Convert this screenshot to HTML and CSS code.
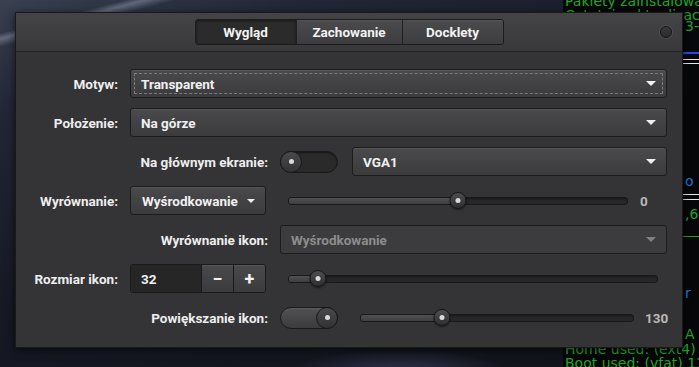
FILE: index.html
```html
<!DOCTYPE html>
<html lang="pl">
    <head>
        <meta charset="UTF-8" />
        <meta name="viewport" content="width=device-width, initial-scale=1.0" />
        <title>Ustawienia doku</title>
        <link rel="stylesheet" href="styles.css">
    </head>
    <body>
        <div id="desktop">
            <!-- conky na pulpicie, w większości zasłonięty oknem -->
            <div id="conky">
                <div class="c-line c-first">Pakiety zainstalowane: 1647</div>
                <div class="c-line">Ostatnia aktualizacja:</div>
                <div class="c-line c-edge c-date">3-12-01</div>
                <div class="c-rule blue r1"></div>
                <div class="c-rule white r2"></div>
                <div class="c-rule white r3"></div>
                <div class="c-line c-edge c-info">o</div>
                <div class="c-rule white r4"></div>
                <div class="c-rule white r5"></div>
                <div class="c-line c-edge c-num">,68</div>
                <div class="c-rule green r6"></div>
                <div class="c-line c-edge c-info2">r</div>
                <div class="c-line c-edge c-hdd">A HDD</div>
                <div class="c-line c-home">Home used: (ext4) 12%</div>
                <div class="c-line">Boot used: (vfat) 11%</div>
            </div>

            <div id="dialog">
                <div class="titlebar">
                    <div></div>
                    <div class="tabs">
                        <span class="tab active">Wygląd</span>
                        <span class="tab wide">Zachowanie</span>
                        <span class="tab">Docklety</span>
                    </div>
                    <span class="close"></span>
                </div>

                <div class="form">
                    <div class="row">
                        <span class="lbl">Motyw:</span>
                        <div class="combo focus"><span>Transparent</span><i class="arrow"></i></div>
                    </div>
                    <div class="row">
                        <span class="lbl">Położenie:</span>
                        <div class="combo"><span>Na górze</span><i class="arrow"></i></div>
                    </div>
                    <div class="row">
                        <span class="lbl sub">Na głównym ekranie:</span>
                        <div class="switch"><span class="knob"></span></div>
                        <div class="combo screen"><span>VGA1</span><i class="arrow"></i></div>
                    </div>
                    <div class="row">
                        <span class="lbl">Wyrównanie:</span>
                        <div class="button"><span>Wyśrodkowanie</span><i class="arrow small"></i></div>
                        <div class="slider">
                            <div class="track"><div class="fill" style="width: 50%"></div></div>
                            <span class="thumb" style="left: 50%"></span>
                        </div>
                        <span class="value">0</span>
                    </div>
                    <div class="row">
                        <span class="lbl sub">Wyrównanie ikon:</span>
                        <div class="combo disabled"><span>Wyśrodkowanie</span><i class="arrow"></i></div>
                    </div>
                    <div class="row">
                        <span class="lbl">Rozmiar ikon:</span>
                        <div class="spin">
                            <span class="field">32</span>
                            <span class="step">&minus;</span>
                            <span class="step">+</span>
                        </div>
                        <div class="slider size">
                            <div class="track"><div class="fill" style="width: 8%"></div></div>
                            <span class="thumb" style="left: 8%"></span>
                        </div>
                    </div>
                    <div class="row">
                        <span class="lbl sub">Powiększanie ikon:</span>
                        <div class="switch on"><span class="knob"></span></div>
                        <div class="slider">
                            <div class="track"><div class="fill" style="width: 30%"></div></div>
                            <span class="thumb" style="left: 30%"></span>
                        </div>
                        <span class="value zoom">130</span>
                    </div>
                </div>
            </div>
        </div>
    </body>
</html>
```

FILE: styles.css
```css
body {
    margin: 0;
    font-family: Roboto, "Liberation Sans", sans-serif;
}

#desktop {
    position: relative;
    width: 699px;
    height: 367px;
    box-sizing: border-box;
    padding: 12px 0 0 15px;
    overflow: hidden;
    background:
        radial-gradient(ellipse 110px 22px at 400px 372px, #30344c 0%, rgba(48, 52, 76, 0) 100%),
        linear-gradient(165deg, transparent 6%, rgba(190, 200, 225, 0.35) 7%, transparent 8.5%),
        linear-gradient(160deg, #3a4050 0%, #222636 18%, #161924 50%, #101219 100%);
}

/* conky */
#conky {
    position: absolute;
    left: 563px;
    top: 0;
    width: 136px;
    height: 367px;
    background: rgba(6, 7, 9, 0.92);
    color: #22a424;
    font-family: "DejaVu Sans", sans-serif;
    font-size: 14px;
    line-height: 14px;
    white-space: nowrap;
    overflow: hidden;
}

.c-line {
    height: 14px;
    padding-left: 2px;
}

.c-first { margin-top: -6px; }
.c-edge { padding-left: 122px; }
.c-date { margin-top: -3px; }
.c-info { margin-top: 110px; color: #1b78d0; }
.c-num { margin-top: 7px; }
.c-info2 { margin-top: 49px; color: #1b78d0; }
.c-hdd { margin-top: 27px; }
.c-home { margin-top: 1px; }

.c-rule { height: 1px; }
.c-rule.blue { background: #2344ff; height: 2px; }
.c-rule.white { background: #e8e8e8; }
.c-rule.green { background: #22a424; }
.r1 { margin-top: 19px; }
.r2 { margin-top: 5px; }
.r3 { margin-top: 3px; }
.r4 { margin-top: 6px; }
.r5 { margin-top: 4px; }
.r6 { margin-top: 15px; }

/* okno */
#dialog {
    position: relative;
    width: 668px;
    height: 336px;
    box-sizing: border-box;
    border: 1px solid #19191a;
    background: #343436;
    box-shadow: 0 2px 8px rgba(0, 0, 0, 0.6);
    color: #eeeeee;
    font-size: 13.5px;
    font-weight: 700;
}

.titlebar {
    height: 38px;
    border-bottom: 1px solid #222223;
    display: grid;
    grid-template-columns: 1fr auto 1fr;
    align-items: center;
    background: linear-gradient(#444446, #39393b);
}

.tabs {
    display: flex;
    height: 26px;
    box-sizing: border-box;
    border: 1px solid #1b1b1c;
    border-radius: 3px;
    overflow: hidden;
}

.tab {
    width: 100px;
    line-height: 24px;
    text-align: center;
    color: #f2f2f2;
    background: linear-gradient(#4b4b4d, #3d3d3f);
    box-shadow: inset 0 1px 0 rgba(255, 255, 255, 0.06);
}

.tab + .tab {
    border-left: 1px solid #1f1f20;
}

.tab.wide {
    width: 105px;
}

.tab.active {
    background: #2b2b2c;
    box-shadow: inset 0 1px 3px rgba(0, 0, 0, 0.5);
}

.close {
    justify-self: end;
    margin-right: 10px;
    width: 12px;
    height: 12px;
    box-sizing: border-box;
    border-radius: 50%;
    border: 1px solid #141415;
    background: linear-gradient(#3a3a3c, #2a2a2b);
    box-shadow: 0 0 0 1px rgba(255, 255, 255, 0.08);
}

.form {
    display: flex;
    flex-direction: column;
    gap: 10px;
    padding: 17px 15px 0 0;
}

.row {
    display: flex;
    align-items: center;
    height: 29px;
}

.lbl {
    flex: none;
    width: 102px;
    margin-right: 12px;
    text-align: right;
    white-space: nowrap;
}

.lbl.sub {
    width: 252px;
}

.combo,
.button {
    height: 29px;
    box-sizing: border-box;
    border: 1px solid #1c1c1d;
    border-radius: 3px;
    background: linear-gradient(#4a4a4c, #3b3b3d);
    box-shadow: inset 0 1px 0 rgba(255, 255, 255, 0.07);
    display: flex;
    align-items: center;
    color: #f0f0f0;
}

.combo {
    flex: 1;
    position: relative;
    justify-content: space-between;
    padding: 0 10px 0 10px;
}

.combo.focus::after {
    content: "";
    position: absolute;
    top: 3px;
    left: 3px;
    right: 3px;
    bottom: 3px;
    border: 1px dashed #7a7a7a;
}

.combo.screen {
    margin-left: 14px;
}

.combo.disabled {
    background: #3c3c3e;
    box-shadow: none;
    color: #8d8d8d;
}

.arrow {
    width: 0;
    height: 0;
    border-left: 5px solid transparent;
    border-right: 5px solid transparent;
    border-top: 5px solid #f0f0f0;
}

.combo.disabled .arrow {
    border-top-color: #808080;
}

.arrow.small {
    border-left-width: 4px;
    border-right-width: 4px;
    border-top-width: 4px;
}

.button {
    flex: none;
    width: 136px;
    padding-left: 11px;
    gap: 9px;
}

/* przełącznik */
.switch {
    flex: none;
    width: 58px;
    height: 22px;
    box-sizing: border-box;
    border: 1px solid #19191a;
    border-radius: 11px;
    background: #2a2a2b;
    box-shadow: inset 0 1px 2px rgba(0, 0, 0, 0.5);
    display: flex;
    align-items: center;
}

.switch.on {
    justify-content: flex-end;
    background: linear-gradient(#515153, #3b3b3d);
    box-shadow: inset 0 1px 0 rgba(255, 255, 255, 0.06);
}

.knob {
    width: 22px;
    height: 22px;
    margin: -1px;
    box-sizing: border-box;
    border: 1px solid #18181a;
    border-radius: 50%;
    background: linear-gradient(#4a4a4c, #323234);
    display: flex;
    align-items: center;
    justify-content: center;
}

.knob::after,
.thumb::after {
    content: "";
    width: 5px;
    height: 5px;
    border-radius: 50%;
    background: #dadada;
}

/* suwak */
.slider {
    flex: 1;
    position: relative;
    height: 17px;
    margin-left: 22px;
    display: flex;
    align-items: center;
}

.slider.size {
    margin-right: 9px;
}

.track {
    width: 100%;
    height: 8px;
    box-sizing: border-box;
    border: 1px solid #19191a;
    border-radius: 3px;
    background: #27272a;
    box-shadow: inset 0 1px 2px rgba(0, 0, 0, 0.4);
    overflow: hidden;
}

.fill {
    height: 100%;
    background: linear-gradient(#505052, #3e3e40);
}

.thumb {
    position: absolute;
    top: 0;
    width: 17px;
    height: 17px;
    box-sizing: border-box;
    transform: translateX(-50%);
    border: 1px solid #161617;
    border-radius: 50%;
    background: linear-gradient(#4e4e50, #2e2e30);
    box-shadow: 0 1px 2px rgba(0, 0, 0, 0.5);
    display: flex;
    align-items: center;
    justify-content: center;
}

.value {
    flex: none;
    width: 27px;
    margin-left: 12px;
    color: #b9b9b9;
}

.value.zoom {
    width: 22px;
    margin-left: 11px;
}

/* pole liczbowe */
.spin {
    flex: none;
    display: flex;
    width: 136px;
    height: 29px;
    box-sizing: border-box;
    border: 1px solid #1a1a1b;
    border-radius: 3px;
    overflow: hidden;
}

.spin .field {
    flex: 1;
    display: flex;
    align-items: center;
    padding-left: 10px;
    background: #262627;
    color: #f0f0f0;
}

.spin .step {
    width: 31px;
    border-left: 1px solid #1a1a1b;
    background: linear-gradient(#4a4a4c, #3b3b3d);
    box-shadow: inset 0 1px 0 rgba(255, 255, 255, 0.07);
    color: #f4f4f4;
    font-size: 18px;
    line-height: 27px;
    text-align: center;
}
```
